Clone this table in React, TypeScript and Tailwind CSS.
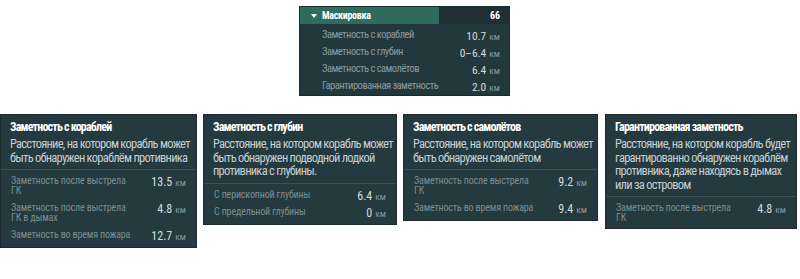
import React from "react";

const F = "font-['Roboto',sans-serif] [font-stretch:75%]";

type Row = { label: string[]; value: string };
type Card = { title: string; desc: string[]; rows: Row[]; w: string; gap: string; cls?: string };

const cards: Card[] = [
  {
    title: "Заметность с кораблей",
    desc: ["Расстояние, на котором корабль может", "быть обнаружен кораблём противника"],
    rows: [
      { label: ["Заметность после выстрела", "ГК"], value: "13.5" },
      { label: ["Заметность после выстрела", "ГК в дымах"], value: "4.8" },
      { label: ["Заметность во время пожара"], value: "12.7" },
    ],
    w: "w-[197px]",
    gap: "gap-[7px]",
  },
  {
    title: "Заметность с глубин",
    desc: ["Расстояние, на котором корабль может", "быть обнаружен подводной лодкой", "противника с глубины."],
    rows: [
      { label: ["С перископной глубины"], value: "6.4" },
      { label: ["С предельной глубины"], value: "0" },
    ],
    w: "w-[194px]",
    gap: "gap-[5px]",
  },
  {
    title: "Заметность с самолётов",
    desc: ["Расстояние, на котором корабль может", "быть обнаружен самолётом"],
    rows: [
      { label: ["Заметность после выстрела", "ГК"], value: "9.2" },
      { label: ["Заметность во время пожара"], value: "9.4" },
    ],
    w: "w-[195px]",
    gap: "gap-[7px]",
  },
  {
    title: "Гарантированная заметность",
    desc: [
      "Расстояние, на котором корабль будет",
      "гарантированно обнаружен кораблём",
      "противника, даже находясь в дымах",
      "или за островом",
    ],
    rows: [{ label: ["Заметность после выстрела", "ГК"], value: "4.8" }],
    w: "w-[192px]",
    gap: "gap-[7px]",
    cls: "ml-[1px]",
  },
];

const topRows = [
  { label: "Заметность с кораблей", value: "10.7" },
  { label: "Заметность с глубин", value: "0–6.4" },
  { label: "Заметность с самолётов", value: "6.4" },
  { label: "Гарантированная заметность", value: "2.0" },
];

function InfoCard({ c }: { c: Card }) {
  return (
    <div className={`${c.w} ${c.cls ?? ""} bg-[#243a3f] border border-[#1b2b2f] flex flex-col`}>
      <div className="px-[9px] pt-[4px] pb-[5px]">
        <div className="text-[12px] leading-[16px] font-bold tracking-[-0.8px] text-white whitespace-nowrap">
          {c.title}
        </div>
        <div className="mt-[2px] text-[12.5px] leading-[13.5px] tracking-[-0.75px] text-[#c5ced0]">
          {c.desc.map((d, i) => (
            <div key={i} className="whitespace-nowrap">
              {d}
            </div>
          ))}
        </div>
      </div>
      <div className={`border-t border-[#3a5055] pl-[10px] pr-[9px] pt-[6px] pb-[5px] flex flex-col ${c.gap}`}>
        {c.rows.map((r, i) => (
          <div key={i} className="flex justify-between items-start">
            <div className="text-[10px] leading-[10px] tracking-[-0.15px] text-[#7d8d91]">
              {r.label.map((l, j) => (
                <div key={j} className="whitespace-nowrap">
                  {l}
                </div>
              ))}
            </div>
            <div className="whitespace-nowrap leading-[10px] pr-[1px]">
              <span className="text-[12px] text-[#d3dadc]">{r.value}</span>
              <span className="text-[9.5px] text-[#8a989b] ml-[3px]">км</span>
            </div>
          </div>
        ))}
      </div>
    </div>
  );
}

export default function App() {
  return (
    <div className={`w-[800px] h-[279px] bg-white ${F} overflow-hidden`}>
      <div className="pt-[6px] pl-[299px]">
        <div className="w-[211px] bg-[#23383d] border border-[#1b2a2e]">
          <div className="flex h-[17px]">
            <div className="w-[139px] bg-[#2f6c5b] flex items-center pl-[11px]">
              <svg width="6" height="4" viewBox="0 0 6 4" className="mr-[5px]">
                <path d="M0 0 L6 0 L3 4 Z" fill="#ffffff" />
              </svg>
              <span className="text-[10px] font-bold tracking-[-0.3px] text-white leading-none">Маскировка</span>
            </div>
            <div className="flex-1 bg-[#1f3035] flex items-center justify-end pr-[9px]">
              <span className="text-[10px] font-bold text-white leading-none">66</span>
            </div>
          </div>
          <div className="pt-[2px] pb-[1px]">
            {topRows.map((r, i) => (
              <div key={i} className="h-[17px] flex items-center justify-between pl-[22px] pr-[9px]">
                <span className="text-[10.5px] tracking-[-0.5px] text-[#8c9a9d] whitespace-nowrap">{r.label}</span>
                <span className="whitespace-nowrap">
                  <span className="text-[11.5px] text-[#d3dadc]">{r.value}</span>
                  <span className="text-[9.5px] text-[#8a989b] ml-[3px]">км</span>
                </span>
              </div>
            ))}
          </div>
        </div>
      </div>
      <div className="mt-[18px] flex items-start gap-[6px]">
        {cards.map((c, i) => (
          <InfoCard key={i} c={c} />
        ))}
      </div>
    </div>
  );
}
